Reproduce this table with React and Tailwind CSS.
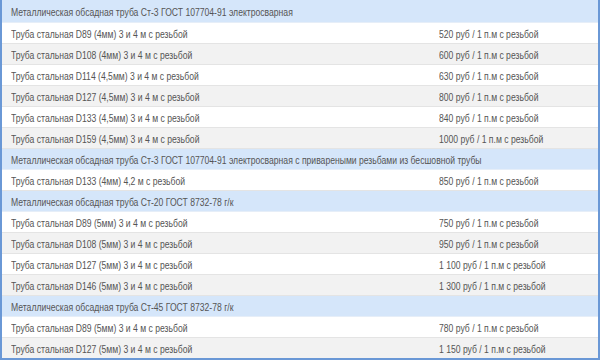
const groups = [
  {
    title: "Металлическая обсадная труба Ст-3 ГОСТ 107704-91 электросварная",
    items: [
      ["Труба стальная D89 (4мм) 3 и 4 м с резьбой", "520 руб / 1 п.м с резьбой"],
      ["Труба стальная D108 (4мм) 3 и 4 м с резьбой", "600 руб / 1 п.м с резьбой"],
      ["Труба стальная D114 (4,5мм) 3 и 4 м с резьбой", "630 руб / 1 п.м с резьбой"],
      ["Труба стальная D127 (4,5мм) 3 и 4 м с резьбой", "800 руб / 1 п.м с резьбой"],
      ["Труба стальная D133 (4,5мм) 3 и 4 м с резьбой", "840 руб / 1 п.м с резьбой"],
      ["Труба стальная D159 (4,5мм) 3 и 4 м с резьбой", "1000 руб / 1 п.м с резьбой"],
    ],
  },
  {
    title:
      "Металлическая обсадная труба Ст-3 ГОСТ 107704-91 электросварная с привареными резьбами из бесшовной трубы",
    items: [["Труба стальная D133 (4мм) 4,2 м с резьбой", "850 руб / 1 п.м с резьбой"]],
  },
  {
    title: "Металлическая обсадная труба Ст-20 ГОСТ 8732-78 г/к",
    items: [
      ["Труба стальная D89 (5мм) 3 и 4 м с резьбой", "750 руб / 1 п.м с резьбой"],
      ["Труба стальная D108 (5мм) 3 и 4 м с резьбой", "950 руб / 1 п.м с резьбой"],
      ["Труба стальная D127 (5мм) 3 и 4 м с резьбой", "1 100 руб / 1 п.м с резьбой"],
      ["Труба стальная D146 (5мм) 3 и 4 м с резьбой", "1 300 руб / 1 п.м с резьбой"],
    ],
  },
  {
    title: "Металлическая обсадная труба Ст-45 ГОСТ 8732-78 г/к",
    items: [
      ["Труба стальная D89 (5мм) 3 и 4 м с резьбой", "780 руб / 1 п.м с резьбой"],
      ["Труба стальная D127 (5мм) 3 и 4 м с резьбой", "1 150 руб / 1 п.м с резьбой"],
    ],
  },
];

// narrow table text: the site's font is set tighter than Arial
const Txt = ({ children }) => (
  <span className="inline-block whitespace-nowrap origin-left scale-x-[0.86]">{children}</span>
);

export default function App() {
  return (
    <div className="w-[600px] h-[360px] overflow-hidden bg-white border-x-2 border-b-2 border-[#6a98d6] font-['Liberation_Sans',Arial,sans-serif] text-[10px] text-[#555]">
      {groups.map((g, gi) => (
        <div key={g.title}>
          <div
            className={`${gi === 0 ? "h-[23px] pt-[3px]" : "h-[21px] pt-[2px]"} flex items-center pl-[9px] bg-[#d5e6fa] border-b border-[#e6eef8] overflow-hidden`}
          >
            <Txt>{g.title}</Txt>
          </div>
          {g.items.map(([name, price], i) => (
            <div
              key={name}
              className={`h-[21px] pt-[2px] flex items-center border-b border-[#e4e4e4] ${i % 2 === 0 ? "bg-white" : "bg-[#f2f2f2]"}`}
            >
              <div className="w-[437px] pl-[9px] shrink-0">
                <Txt>{name}</Txt>
              </div>
              <div>
                <Txt>{price}</Txt>
              </div>
            </div>
          ))}
        </div>
      ))}
    </div>
  );
}
